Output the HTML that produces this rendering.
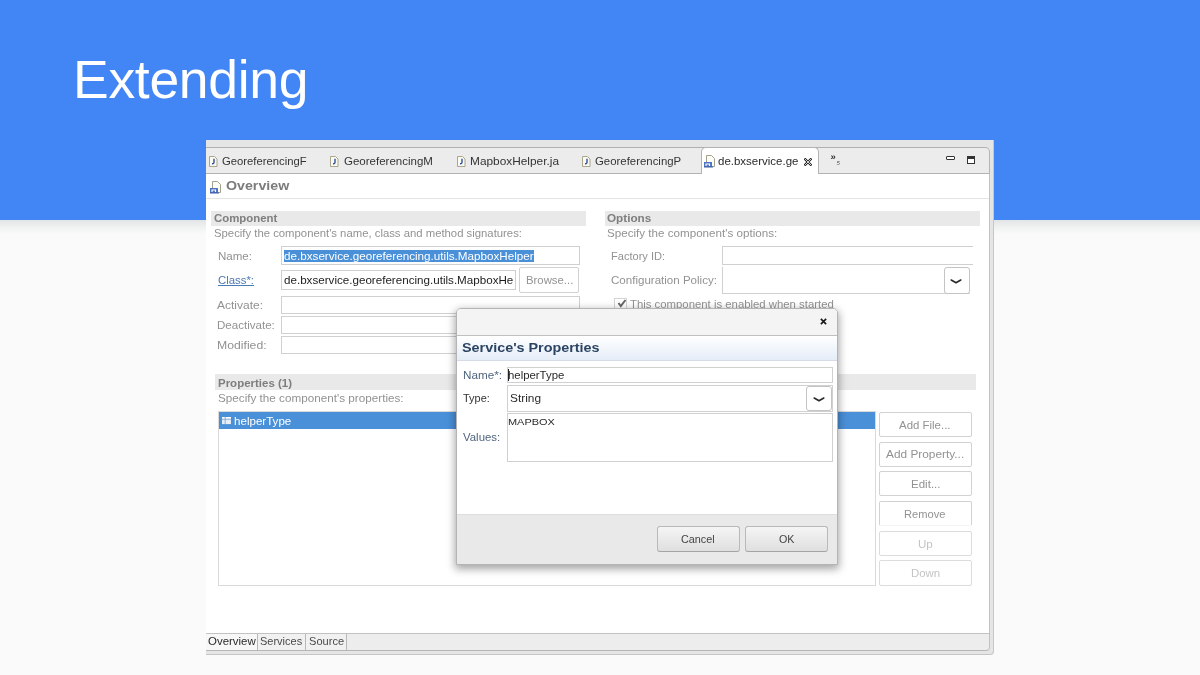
<!DOCTYPE html>
<html><head><meta charset="utf-8">
<style>
*{box-sizing:border-box;margin:0;padding:0}
html,body{width:1200px;height:675px;overflow:hidden}
body{background:#fafafa;font-family:"Liberation Sans",sans-serif;position:relative;font-size:11px;color:#929292}
.a{position:absolute}
.t{position:absolute;white-space:nowrap;line-height:14px;height:14px;transform-origin:0 50%}
#band{left:0;top:0;width:1200px;height:220px;background:#4285f4}
#bandsh{left:0;top:220px;width:1200px;height:14px;background:linear-gradient(#e2e4e6,#eeefef 45%,#fafafa)}
#title{left:73px;top:45px;font-size:53.5px;line-height:70px;height:70px;color:#fff;letter-spacing:-0.3px}
#shot{left:206px;top:140px;width:788px;height:516px;overflow:hidden;filter:blur(0.35px)}
.inp{position:absolute;background:#fff;border:1px solid #d0d0d0}
.btn{position:absolute;background:#fff;border:1px solid #d2d2d2;border-radius:2px}
.bar{position:absolute;background:#e9e9e9}
.gbtn{position:absolute;border:1px solid #b9b9b9;border-bottom-color:#a4a4a4;border-radius:3px;background:linear-gradient(#f5f5f5,#dfdfdf)}
</style></head><body>
<div id="band" class="a"></div>
<div id="bandsh" class="a"></div>
<div id="title" class="t">Extending</div>

<div id="shot" class="a">
  <!-- frame -->
  <div class="a" style="left:0;top:0;width:788px;height:515px;background:#e5e5e5;border-right:1px solid #c6c6c6;border-bottom:1px solid #c6c6c6;border-bottom-right-radius:4px"></div>
  <!-- tab bar -->
  <div class="a" style="left:0;top:7px;width:784px;height:27px;background:#ececec;border-top:1px solid #b0b0b0;border-right:1px solid #b4b4b4;border-top-right-radius:5px"></div>
  <!-- content -->
  <div class="a" style="left:0;top:33px;width:784px;height:461px;background:#fff;border-top:1px solid #b2b2b2;border-right:1px solid #c2c2c2"></div>
  <!-- active tab -->
  <div class="a" style="left:495px;top:7px;width:118px;height:27px;background:#fff;border:1px solid #b2b2b2;border-bottom:none;border-radius:5px 5px 0 0"></div>
  <svg class="a" style="left:2.6px;top:16px" width="9" height="11" viewBox="0 0 9 11"><path d="M0.5 0.5H5.5L8 3V10.5H0.5Z" fill="#fbfaf0" stroke="#a39d82" stroke-width="0.9"/><path d="M5 2.8V6.3Q5 8 3 7.8" stroke="#2f4f9c" stroke-width="1.4" fill="none"/></svg>
<svg class="a" style="left:124.0px;top:16px" width="9" height="11" viewBox="0 0 9 11"><path d="M0.5 0.5H5.5L8 3V10.5H0.5Z" fill="#fbfaf0" stroke="#a39d82" stroke-width="0.9"/><path d="M5 2.8V6.3Q5 8 3 7.8" stroke="#2f4f9c" stroke-width="1.4" fill="none"/></svg>
<svg class="a" style="left:250.8px;top:16px" width="9" height="11" viewBox="0 0 9 11"><path d="M0.5 0.5H5.5L8 3V10.5H0.5Z" fill="#fbfaf0" stroke="#a39d82" stroke-width="0.9"/><path d="M5 2.8V6.3Q5 8 3 7.8" stroke="#2f4f9c" stroke-width="1.4" fill="none"/></svg>
<svg class="a" style="left:375.7px;top:16px" width="9" height="11" viewBox="0 0 9 11"><path d="M0.5 0.5H5.5L8 3V10.5H0.5Z" fill="#fbfaf0" stroke="#a39d82" stroke-width="0.9"/><path d="M5 2.8V6.3Q5 8 3 7.8" stroke="#2f4f9c" stroke-width="1.4" fill="none"/></svg>
<svg class="a" style="left:498px;top:15px" width="11" height="13" viewBox="0 0 11 13"><path d="M2.5 0.5H7.5L10.5 3.5V11.5H2.5Z" fill="#fdfdf8" stroke="#a0a08c"/><rect x="0" y="7" width="8" height="5" fill="#4f74c2"/><path d="M2 11V9H5.5V11" stroke="#fff" stroke-width="1.1" fill="none"/><rect x="0" y="11.5" width="9" height="1" fill="#3a5aa6"/></svg>
<svg class="a" style="left:4px;top:41px" width="11" height="13" viewBox="0 0 11 13"><path d="M2.5 0.5H7.5L10.5 3.5V11.5H2.5Z" fill="#fdfdf8" stroke="#a0a08c"/><rect x="0" y="7" width="8" height="5" fill="#4f74c2"/><path d="M2 11V9H5.5V11" stroke="#fff" stroke-width="1.1" fill="none"/><rect x="0" y="11.5" width="9" height="1" fill="#3a5aa6"/></svg>
<svg class="a" style="left:597.5px;top:17.5px" width="8" height="8" viewBox="0 0 8 8"><path d="M1.3 1.3L6.7 6.7M6.7 1.3L1.3 6.7" stroke="#222" stroke-width="2.3" stroke-linecap="square"/><path d="M1.3 1.3L6.7 6.7M6.7 1.3L1.3 6.7" stroke="#fff" stroke-width="0.8" stroke-linecap="square"/></svg>
<div class="t" style="left:624.5px;top:10px;font-size:9.5px;color:#333;font-weight:bold;letter-spacing:-0.5px">»</div>
<div class="t" style="left:630.5px;top:16px;font-size:6px;color:#555;font-style:italic">5</div>
<div class="a" style="left:740px;top:16px;width:9px;height:4px;border:1px solid #333;border-radius:1px;background:#fff"></div>
<div class="a" style="left:761px;top:16px;width:8px;height:8px;border:1px solid #333;border-top-width:3px;background:#fff"></div>

  <div class="a" style="left:0;top:58px;width:783px;height:1px;background:#e4e4e4"></div>

  <!-- Component -->
  <div class="bar" style="left:5px;top:71px;width:375px;height:15px"></div>
  <div class="inp" style="left:75px;top:106px;width:299px;height:19px"></div>
  <div class="a" style="left:78px;top:110px;width:250px;height:12px;background:#4a90d9"></div>
  <div class="inp" style="left:75px;top:130px;width:235px;height:20px"></div>
  <div class="btn" style="left:313px;top:127px;width:60px;height:26px"></div>
  <div class="inp" style="left:75px;top:156px;width:299px;height:18px"></div>
  <div class="inp" style="left:75px;top:176px;width:299px;height:18px"></div>
  <div class="inp" style="left:75px;top:196px;width:299px;height:18px"></div>

  <!-- Options -->
  <div class="bar" style="left:399px;top:71px;width:375px;height:15px"></div>
  <div class="inp" style="left:516px;top:106px;width:251px;height:19px;border-right:none"></div>
  <div class="inp" style="left:516px;top:127px;width:248px;height:27px;border-top:none;border-right:none"></div>
  <div class="btn" style="left:738px;top:127px;width:26px;height:27px;border-color:#c4c4c4;border-radius:3px"></div>
  <svg class="a" style="left:743px;top:137px" width="14" height="8" viewBox="0 0 14 8"><path d="M2.2 3 L7 5.8 L11.8 3" fill="none" stroke="#2a2a2a" stroke-width="1.6" stroke-linecap="round" stroke-linejoin="round"/></svg>
  <div class="a" style="left:408px;top:158px;width:13px;height:13px;border:1px solid #d4d4d4;background:#fff"></div>
  <svg class="a" style="left:410px;top:158px" width="11" height="11" viewBox="0 0 11 11"><path d="M2.5 5 L4.8 8 L9.5 2" fill="none" stroke="#686868" stroke-width="2"/></svg>

  <!-- Properties -->
  <div class="bar" style="left:9px;top:234px;width:761px;height:16px"></div>
  <div class="inp" style="left:12px;top:271px;width:658px;height:175px;border-color:#dadada"></div>
  <div class="a" style="left:13px;top:272px;width:656px;height:17px;background:#4a90d9"></div>
  <svg class="a" style="left:16px;top:276.5px" width="9" height="8" viewBox="0 0 10 9"><rect x="0" y="0" width="10" height="8" fill="#e8eef6"/><rect x="0" y="0" width="10" height="2" fill="#fff"/><path d="M3.5 0V8M0 2.5H10" stroke="#7fa6d6" stroke-width="1"/></svg>

  <div class="btn" style="left:673px;top:272px;width:93px;height:25px"></div>
  <div class="btn" style="left:673px;top:302px;width:93px;height:25px"></div>
  <div class="btn" style="left:673px;top:331px;width:93px;height:25px"></div>
  <div class="btn" style="left:673px;top:361px;width:93px;height:25px;border-bottom-color:#f4f4f4"></div>
  <div class="btn" style="left:673px;top:391px;width:93px;height:25px;border-color:#dcdcdc"></div>
  <div class="btn" style="left:673px;top:420px;width:93px;height:26px;border-color:#dcdcdc"></div>

  <!-- bottom tabs -->
  <div class="a" style="left:0;top:493px;width:784px;height:18px;background:#ededed;border-top:1px solid #c2c2c2;border-bottom:1px solid #b6b6b6;border-right:1px solid #c2c2c2;border-bottom-right-radius:4px"></div>
  <div class="a" style="left:0;top:494px;width:52px;height:16px;background:#f7f7f7;border-right:1px solid #b8b8b8"></div>
  <div class="a" style="left:52px;top:494px;width:48px;height:16px;background:#f1f1f1;border-right:1px solid #b8b8b8"></div>
  <div class="a" style="left:100px;top:494px;width:41px;height:16px;background:#f1f1f1;border-right:1px solid #b8b8b8"></div>

<div class="t" style="left:15.7px;top:14.1px;font-size:10.5px;color:#343434;transform:scaleX(1.0736)">GeoreferencingF</div>
<div class="t" style="left:137.8px;top:14.1px;font-size:10.5px;color:#343434;transform:scaleX(1.0958)">GeoreferencingM</div>
<div class="t" style="left:263.5px;top:14.1px;font-size:10.5px;color:#343434;transform:scaleX(1.1295)">MapboxHelper.ja</div>
<div class="t" style="left:389.2px;top:14.1px;font-size:10.5px;color:#343434;transform:scaleX(1.0858)">GeoreferencingP</div>
<div class="t" style="left:512.1px;top:14.1px;font-size:10.5px;color:#2a2a2a;transform:scaleX(1.0932)">de.bxservice.ge</div>
<div class="t" style="left:19.5px;top:39.2px;font-size:12.5px;color:#7c7c7c;transform:scaleX(1.1368);font-weight:bold">Overview</div>
<div class="t" style="left:7.9px;top:71.2px;font-size:11px;color:#7e7e7e;transform:scaleX(1.0375);font-weight:bold">Component</div>
<div class="t" style="left:7.9px;top:86.2px;font-size:11px;color:#929292;transform:scaleX(1.0291)">Specify the component's name, class and method signatures:</div>
<div class="t" style="left:11.6px;top:109.2px;font-size:11px;color:#929292;transform:scaleX(1.0492)">Name:</div>
<div class="t" style="left:77.8px;top:109.2px;font-size:11px;color:#ffffff;transform:scaleX(1.0607)">de.bxservice.georeferencing.utils.MapboxHelper</div>
<div class="t" style="left:12.1px;top:133.2px;font-size:11px;color:#4a7ab5;transform:scaleX(1.0332);text-decoration:underline">Class*:</div>
<div class="t" style="left:77.8px;top:133.2px;font-size:11px;color:#1c1c1c;transform:scaleX(1.0564)">de.bxservice.georeferencing.utils.MapboxHe</div>
<div class="t" style="left:319.5px;top:133.2px;font-size:11px;color:#929292;transform:scaleX(1.0314)">Browse...</div>
<div class="t" style="left:11.3px;top:157.8px;font-size:11px;color:#929292;transform:scaleX(1.0904)">Activate:</div>
<div class="t" style="left:11.3px;top:178.2px;font-size:11px;color:#929292;transform:scaleX(1.0503)">Deactivate:</div>
<div class="t" style="left:11.3px;top:198.0px;font-size:11px;color:#929292;transform:scaleX(1.1111)">Modified:</div>
<div class="t" style="left:401.3px;top:71.2px;font-size:11px;color:#7e7e7e;transform:scaleX(1.0659);font-weight:bold">Options</div>
<div class="t" style="left:401.3px;top:86.2px;font-size:11px;color:#929292;transform:scaleX(1.0565)">Specify the component's options:</div>
<div class="t" style="left:405.0px;top:109.2px;font-size:11px;color:#929292;transform:scaleX(1.0056)">Factory ID:</div>
<div class="t" style="left:405.0px;top:133.2px;font-size:11px;color:#929292;transform:scaleX(1.0497)">Configuration Policy:</div>
<div class="t" style="left:424.3px;top:156.5px;font-size:11px;color:#929292;transform:scaleX(1.0318)">This component is enabled when started</div>
<div class="t" style="left:11.5px;top:235.6px;font-size:11px;color:#7e7e7e;transform:scaleX(1.0434);font-weight:bold">Properties (1)</div>
<div class="t" style="left:11.5px;top:250.5px;font-size:11px;color:#929292;transform:scaleX(1.0634)">Specify the component's properties:</div>
<div class="t" style="left:28.2px;top:273.8px;font-size:11px;color:#ffffff;transform:scaleX(1.0526)">helperType</div>
<div class="t" style="left:692.8px;top:277.7px;font-size:11px;color:#929292;transform:scaleX(1.0397)">Add File...</div>
<div class="t" style="left:679.7px;top:307.2px;font-size:11px;color:#929292;transform:scaleX(1.0777)">Add Property...</div>
<div class="t" style="left:704.5px;top:337.0px;font-size:11px;color:#929292;transform:scaleX(1.0489)">Edit...</div>
<div class="t" style="left:697.5px;top:366.7px;font-size:11px;color:#929292;transform:scaleX(1.0130)">Remove</div>
<div class="t" style="left:711.7px;top:396.5px;font-size:11px;color:#c4c4c4;transform:scaleX(1.0524)">Up</div>
<div class="t" style="left:704.5px;top:426.0px;font-size:11px;color:#c4c4c4;transform:scaleX(1.0382)">Down</div>
<div class="t" style="left:1.8px;top:493.9px;font-size:11px;color:#2a2a2a;transform:scaleX(1.0405)">Overview</div>
<div class="t" style="left:54.3px;top:493.9px;font-size:11px;color:#4a4a4a;transform:scaleX(1.0003)">Services</div>
<div class="t" style="left:102.7px;top:493.9px;font-size:11px;color:#4a4a4a;transform:scaleX(1.0069)">Source</div>

  <!-- dialog -->
  <div class="a" style="left:250px;top:168px;width:382px;height:257px;background:#fff;border:1px solid #b4b4b4;border-radius:5px 5px 0 0;box-shadow:0 3px 9px 1px rgba(0,0,0,.36)"></div>
  <div class="a" style="left:251px;top:169px;width:380px;height:27px;background:#f4f4f4;border-bottom:1px solid #c0c0c0;border-radius:4px 4px 0 0"></div>
  <div class="a" style="left:251px;top:196px;width:380px;height:25px;background:linear-gradient(#fff,#e5edf8);border-bottom:1px solid #d6dce6"></div>
  <svg class="a" style="left:614.3px;top:178.3px" width="7" height="7" viewBox="0 0 8 8"><path d="M1 1L7 7M7 1L1 7" stroke="#1a1a1a" stroke-width="1.9"/></svg>
  <div class="inp" style="left:301px;top:227px;width:326px;height:16px"></div>
  <div class="a" style="left:302px;top:229px;width:1px;height:12px;background:#222"></div>
  <div class="inp" style="left:301px;top:245px;width:326px;height:27px"></div>
  <div class="btn" style="left:600px;top:246px;width:26px;height:25px;border-color:#c4c4c4;border-radius:3px"></div>
  <svg class="a" style="left:606px;top:255px" width="14" height="8" viewBox="0 0 14 8"><path d="M2.2 3 L7 5.8 L11.8 3" fill="none" stroke="#2a2a2a" stroke-width="1.6" stroke-linecap="round" stroke-linejoin="round"/></svg>
  <div class="inp" style="left:301px;top:273px;width:326px;height:49px"></div>
  <div class="a" style="left:251px;top:374px;width:380px;height:50px;background:#e9e9e9;border-top:1px solid #dedede"></div>
  <div class="gbtn" style="left:451px;top:386px;width:83px;height:26px"></div>
  <div class="gbtn" style="left:539px;top:386px;width:83px;height:26px"></div>
<div class="t" style="left:255.9px;top:200.7px;font-size:13px;color:#2b4463;transform:scaleX(1.1052);font-weight:bold">Service's Properties</div>
<div class="t" style="left:256.7px;top:228.0px;font-size:11px;color:#50657f;transform:scaleX(1.0658)">Name*:</div>
<div class="t" style="left:301.7px;top:228.0px;font-size:11px;color:#2a2a2a;transform:scaleX(1.0342)">helperType</div>
<div class="t" style="left:256.7px;top:250.6px;font-size:11px;color:#333;transform:scaleX(0.9961)">Type:</div>
<div class="t" style="left:303.5px;top:250.6px;font-size:11px;color:#2a2a2a;transform:scaleX(1.0783)">String</div>
<div class="t" style="left:302.2px;top:275.1px;font-size:9px;color:#2a2a2a;transform:scaleX(1.2151)">MAPBOX</div>
<div class="t" style="left:256.7px;top:289.8px;font-size:11px;color:#50657f;transform:scaleX(1.0369)">Values:</div>
<div class="t" style="left:475.2px;top:392.3px;font-size:11px;color:#444;transform:scaleX(0.9839)">Cancel</div>
<div class="t" style="left:572.5px;top:392.3px;font-size:11px;color:#444;transform:scaleX(0.9745)">OK</div>
</div>
</body></html>
